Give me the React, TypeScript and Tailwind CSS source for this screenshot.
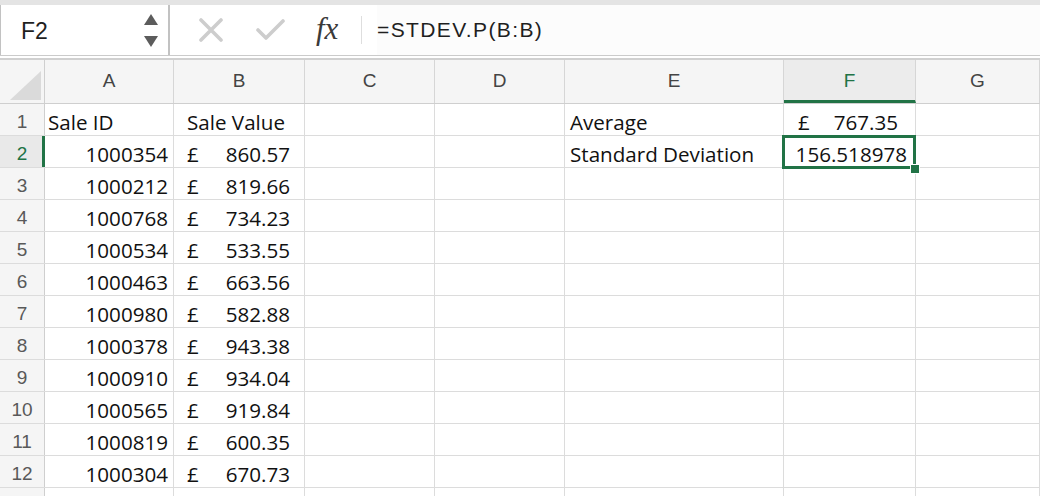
import React from 'react';

const rows: [string, string][] = [
  ['1000354', '860.57'],
  ['1000212', '819.66'],
  ['1000768', '734.23'],
  ['1000534', '533.55'],
  ['1000463', '663.56'],
  ['1000980', '582.88'],
  ['1000378', '943.38'],
  ['1000910', '934.04'],
  ['1000565', '919.84'],
  ['1000819', '600.35'],
  ['1000304', '670.73'],
];

const colWidths = ['w-[129px]', 'w-[131px]', 'w-[130px]', 'w-[130px]', 'w-[219px]', 'w-[132px]', 'flex-1'];
const letters = ['A', 'B', 'C', 'D', 'E', 'F', 'G'];

const cellFont = { fontFamily: '"Open Sans", "Noto Sans", sans-serif' };
const uiFont = { fontFamily: '"Liberation Sans", Arial, sans-serif' };

function Cell({ i, children, className = '' }: { i: number; children?: React.ReactNode; className?: string }) {
  return (
    <div
      className={`${colWidths[i]} shrink-0 h-full border-r border-[#dcdcdc] flex items-center pt-[6px] text-[20.6px] text-[#111] ${className}`}
      style={cellFont}
    >
      {children}
    </div>
  );
}

function Money({ value, pl, pr }: { value: string; pl: string; pr: string }) {
  return (
    <div className={`flex w-full justify-between ${pl} ${pr}`}>
      <span>£</span>
      <span>{value}</span>
    </div>
  );
}

function RowHead({ n, active }: { n?: number; active?: boolean }) {
  return (
    <div
      className={`w-[45px] shrink-0 h-full flex items-center justify-center pt-[6px] text-[19px] border-r ${
        active ? 'bg-[#e9e9e9] text-[#217346] border-r-[3px] border-r-[#217346] pl-[2px]' : 'bg-[#f5f5f5] text-[#595959] border-[#cfcfcf]'
      }`}
      style={uiFont}
    >
      {n}
    </div>
  );
}

export default function App() {
  return (
    <div className="w-[1040px] h-[496px] overflow-hidden bg-white select-none">
      <div className="h-[5px] bg-[#e4e4e4]" />

      {/* name box + formula bar */}
      <div className="h-[50px] flex bg-white">
        <div className="w-[170px] shrink-0 flex items-center border-l border-r-2 border-[#c2c2c2] pl-[20px] pr-[10px]">
          <span className="text-[23px] text-[#1f1f1f] flex-1 pt-[2px]" style={uiFont}>F2</span>
          <div className="flex flex-col gap-[11px]">
            <svg width="14" height="11" viewBox="0 0 14 11"><path d="M7 0 L14 11 L0 11 Z" fill="#5c5c5c" /></svg>
            <svg width="14" height="11" viewBox="0 0 14 11"><path d="M0 0 L14 0 L7 11 Z" fill="#5c5c5c" /></svg>
          </div>
        </div>
        <div className="flex items-center flex-1">
          <svg className="ml-[29px]" width="24" height="24" viewBox="0 0 24 24">
            <path d="M2 2 L22 22 M22 2 L2 22" stroke="#cdcdcd" strokeWidth="3.6" strokeLinecap="round" />
          </svg>
          <svg className="ml-[33px]" width="30" height="24" viewBox="0 0 30 24">
            <path d="M2 12 L10 20 L27 3" stroke="#cdcdcd" strokeWidth="3.6" fill="none" strokeLinecap="round" strokeLinejoin="round" />
          </svg>
          <span
            className="ml-[30px] w-[30px] text-[31px] italic text-[#3a3a3a] leading-none pb-[4px]"
            style={{ fontFamily: '"Liberation Serif", "Times New Roman", serif' }}
          >
            fx
          </span>
          <div className="ml-[15px] w-px h-[28px] bg-[#dedede]" />
          <div className="ml-[15px] flex-1 h-full flex items-center bg-[#fcfcfc] text-[21px] tracking-[1.4px] text-[#1f1f1f]" style={uiFont}>
            =STDEV.P(B:B)
          </div>
        </div>
      </div>
      <div className="h-px bg-[#cbcbcb]" />
      <div className="h-[2px] bg-white" />
      <div className="h-[2px] bg-[#d0d0d0]" />

      {/* column headers */}
      <div className="h-[44px] flex border-b border-[#cfcfcf] bg-[#f5f5f5]">
        <div className="w-[45px] shrink-0 h-full border-r border-[#cfcfcf] relative">
          <svg className="absolute left-[10px] top-[11px]" width="31" height="29" viewBox="0 0 31 29">
            <path d="M31 0 L31 29 L0 29 Z" fill="#dadada" />
          </svg>
        </div>
        {letters.map((l, i) => (
          <div
            key={l}
            className={`${colWidths[i]} shrink-0 h-full border-r border-[#d6d6d6] flex items-center justify-center text-[19px] ${
              l === 'F' ? 'bg-[#ececec] text-[#217346] border-b-[3px] border-b-[#217346] pt-[3px]' : 'text-[#444]'
            }`}
            style={uiFont}
          >
            {l}
          </div>
        ))}
      </div>

      {/* row 1 */}
      <div className="h-[32px] flex border-b border-[#dcdcdc]">
        <RowHead n={1} />
        <Cell i={0} className="pl-[3px]">Sale ID</Cell>
        <Cell i={1} className="pl-[13px]">Sale Value</Cell>
        <Cell i={2} />
        <Cell i={3} />
        <Cell i={4} className="pl-[5px]">Average</Cell>
        <Cell i={5}>
          <Money value="767.35" pl="pl-[14px]" pr="pr-[17px]" />
        </Cell>
        <Cell i={6} />
      </div>

      {rows.map(([id, val], r) => (
        <div key={id} className="h-[32px] flex border-b border-[#dcdcdc]">
          <RowHead n={r + 2} active={r === 0} />
          <Cell i={0} className="justify-end pr-[5px]">{id}</Cell>
          <Cell i={1}>
            <Money value={val} pl="pl-[13px]" pr="pr-[14px]" />
          </Cell>
          <Cell i={2} />
          <Cell i={3} />
          <Cell i={4} className="pl-[5px]">{r === 0 ? 'Standard Deviation' : ''}</Cell>
          <Cell i={5} className="justify-end pr-[8px] relative">
            {r === 0 && (
              <>
                <span>156.518978</span>
                <div className="absolute z-10 -left-[2px] -top-[1px] -right-[1px] -bottom-[2px] border-[3px] border-[#217346] pointer-events-none" />
                <div className="absolute z-20 -right-[5px] -bottom-[7px] w-[10px] h-[10px] bg-[#217346] border border-white" />
              </>
            )}
          </Cell>
          <Cell i={6} />
        </div>
      ))}

      <div className="h-[32px] flex border-b border-[#dcdcdc]">
        <RowHead />
        {letters.map((l, i) => (
          <Cell key={l} i={i} />
        ))}
      </div>
    </div>
  );
}
